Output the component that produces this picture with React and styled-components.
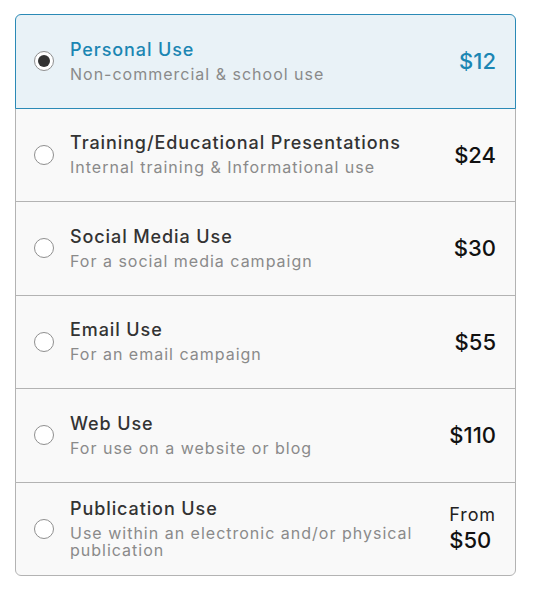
import React, { useState } from "react";
import styled, { createGlobalStyle, css } from "styled-components";

const Global = createGlobalStyle`
  body { margin: 0; background: #fff; font-family: Inter, "Noto Sans", sans-serif; }
`;

const Page = styled.div`
  padding: 14px 0 0 15px;
`;

const List = styled.div`
  width: 501px;
  display: flex;
  flex-direction: column;
`;

const Row = styled.label`
  position: relative;
  box-sizing: border-box;
  height: 94.5px;
  margin-top: -1px;
  &:first-child { margin-top: 0; border-radius: 6px 6px 0 0; }
  &:last-child { border-radius: 0 0 6px 6px; }
  border: 1px solid #b3b3b3;
  background: #f9f9f9;
  display: flex;
  align-items: center;
  padding: 0 19px 0 18px;
  gap: 16px;
  cursor: pointer;
  ${(p) =>
    p.$selected &&
    css`
      border-color: #2b8ab6;
      background: #e9f2f7;
      z-index: 1;
    `}
`;

const Radio = styled.span`
  flex: none;
  box-sizing: border-box;
  width: 20px;
  height: 20px;
  border-radius: 50%;
  border: 1px solid #8f8f8f;
  background: #fff;
  display: flex;
  align-items: center;
  justify-content: center;
  &::after {
    content: "";
    width: 12px;
    height: 12px;
    border-radius: 50%;
    background: #333;
    display: ${(p) => (p.$on ? "block" : "none")};
  }
`;

const Texts = styled.div`
  flex: 1;
  display: flex;
  flex-direction: column;
  gap: 6px;
`;

const Title = styled.div`
  font-size: 18px;
  line-height: 20px;
  font-weight: 500;
  letter-spacing: 0.9px;
  color: ${(p) => (p.$selected ? "#1b86b3" : "#333")};
`;

const Desc = styled.div`
  font-size: 16px;
  line-height: 17px;
  color: #8a8a8a;
  letter-spacing: 1px;
`;

const Price = styled.div`
  flex: none;
  display: flex;
  flex-direction: column;
  align-items: flex-start;
  color: ${(p) => (p.$selected ? "#1b86b3" : "#111")};
`;

const From = styled.span`
  font-size: 18px;
  line-height: 22px;
  letter-spacing: 0.9px;
  color: #222;
`;

const Amount = styled.span`
  font-size: 22px;
  line-height: 28px;
  font-weight: 500;
  letter-spacing: 0px;
`;

const options = [
  { title: "Personal Use", desc: "Non-commercial & school use", price: "$12" },
  { title: "Training/Educational Presentations", desc: "Internal training & Informational use", price: "$24" },
  { title: "Social Media Use", desc: "For a social media campaign", price: "$30" },
  { title: "Email Use", desc: "For an email campaign", price: "$55" },
  { title: "Web Use", desc: "For use on a website or blog", price: "$110" },
  { title: "Publication Use", desc: "Use within an electronic and/or physical publication", price: "$50", from: true },
];

export default function App() {
  const [sel, setSel] = useState(0);
  return (
    <Page>
      <Global />
      <List>
        {options.map((o, i) => (
          <Row key={o.title} $selected={sel === i} onClick={() => setSel(i)}>
            <Radio $on={sel === i} />
            <Texts>
              <Title $selected={sel === i}>{o.title}</Title>
              <Desc>{o.desc}</Desc>
            </Texts>
            <Price $selected={sel === i}>
              {o.from && <From>From</From>}
              <Amount>{o.price}</Amount>
            </Price>
          </Row>
        ))}
      </List>
    </Page>
  );
}
